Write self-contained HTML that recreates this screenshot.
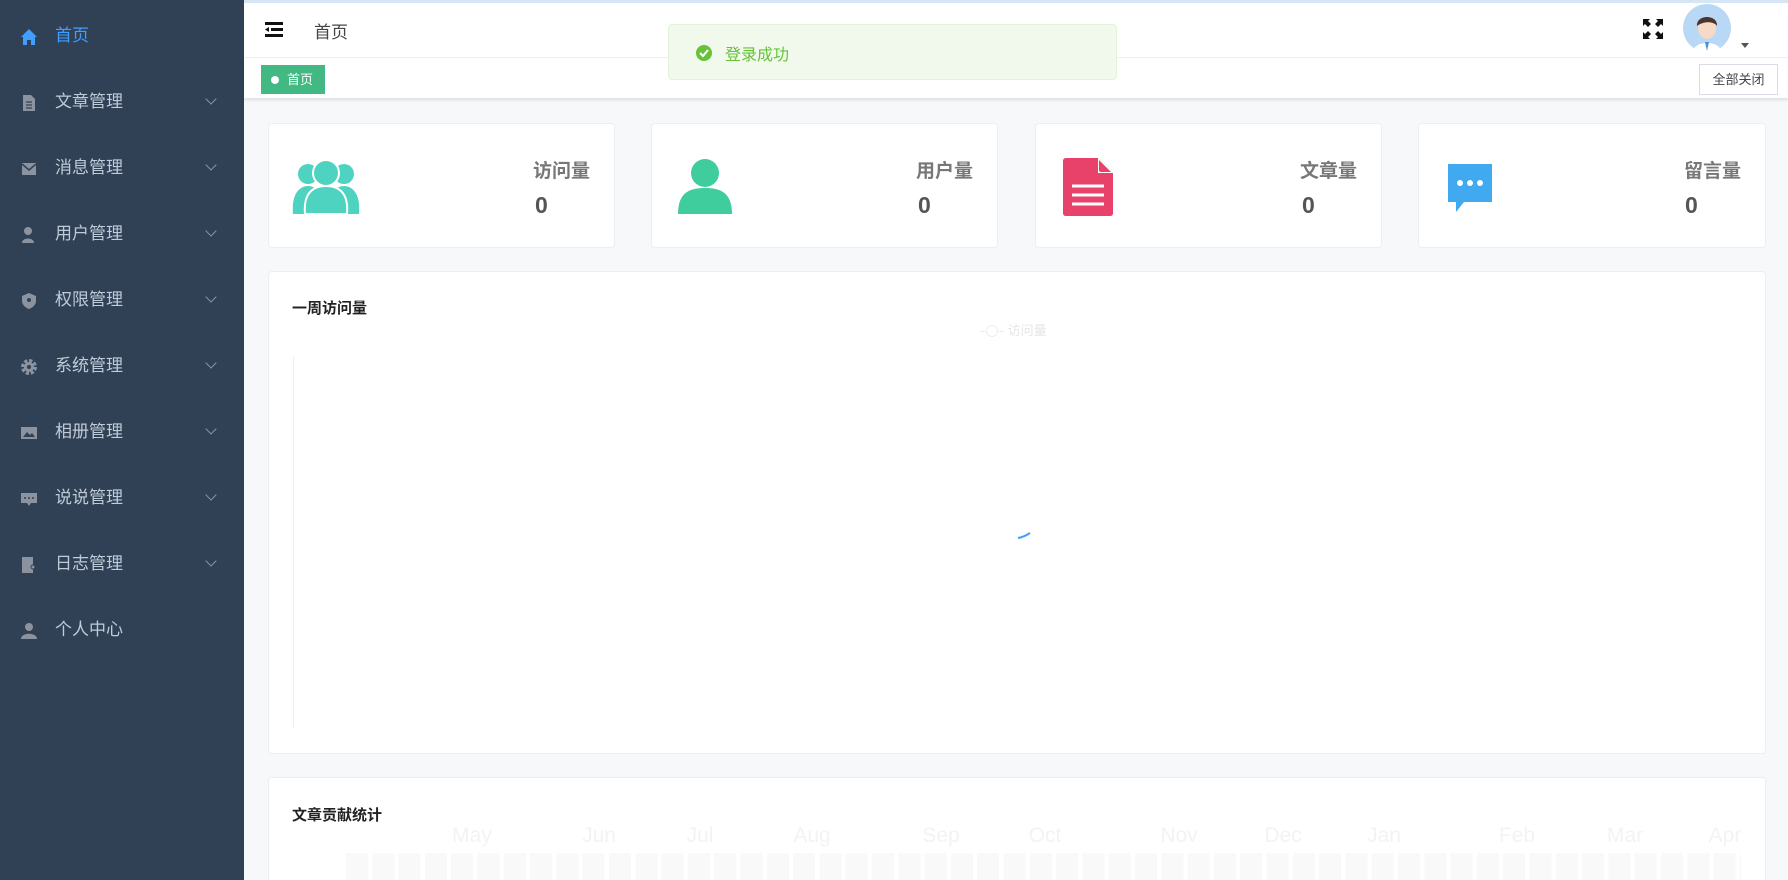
<!DOCTYPE html>
<html style="overflow:hidden;width:1788px;height:880px"><head><meta charset="utf-8"><style>
*{margin:0;padding:0;box-sizing:border-box}
body{width:1788px;height:880px;overflow:hidden;font-family:"Liberation Sans","Noto Sans CJK SC",sans-serif;background:#f7f8fa;position:relative}
.side{position:absolute;left:0;top:0;width:244px;height:880px;background:#304156}
.item{position:absolute;left:0;width:244px;height:66px;color:#bfcbd9;font-size:17px;line-height:66px}
.item .t{position:absolute;left:55px}
.item svg.ic{position:absolute;left:20px;top:25px}
.item .ar{position:absolute;left:207px;top:26px;width:8px;height:8px;border-right:1px solid #8a95a5;border-bottom:1px solid #8a95a5;transform:rotate(45deg)}
.top{position:absolute;left:244px;top:0;right:0;height:3px;background:#d6e6f5}
.hdr{position:absolute;left:244px;top:3px;right:0;height:55px;background:#fff;border-bottom:1px solid #f0f0f0}
.tags{position:absolute;left:244px;top:58px;right:0;height:40px;background:#fff;box-shadow:0 2px 3px rgba(0,0,0,.1)}
.card{position:absolute;background:#fff;border:1px solid #ebeef5;border-radius:4px}
.lab{position:absolute;right:24px;top:32px;font-size:19px;font-weight:bold;color:#777}
.num{position:absolute;left:266px;top:68px;font-size:23px;font-weight:bold;color:#555}
.mon{position:absolute;top:824px;font-size:21px;color:#f3f3f3;transform:translateX(-50%)}
</style></head><body>
<div class="side">
 <div class="item" style="top:3px;color:#409eff"><svg class="ic" width="18" height="18" viewBox="0 0 18 18"><path d="M9 1 L1 9 H3 V17 H7 V12 H11 V17 H15 V9 H17Z" fill="#409eff"/></svg><span class="t">首页</span></div>
 <div class="item" style="top:69px"><svg class="ic" width="18" height="18" viewBox="0 0 18 18"><path d="M3 1H11L15 5V17H3Z" fill="#8b93a0"/><path d="M6 8H12M6 11H12M6 14H12" stroke="#304156" stroke-width="1.2"/></svg><span class="t">文章管理</span><i class="ar"></i></div>
 <div class="item" style="top:135px"><svg class="ic" width="18" height="18" viewBox="0 0 18 18"><rect x="2" y="3" width="14" height="12" fill="#8b93a0"/><path d="M2 4L9 10L16 4" stroke="#304156" stroke-width="1.5" fill="none"/></svg><span class="t">消息管理</span><i class="ar"></i></div>
 <div class="item" style="top:201px"><svg class="ic" width="18" height="18" viewBox="0 0 18 18"><circle cx="8" cy="5" r="4" fill="#8b93a0"/><path d="M2 17C2 11 14 11 14 17Z" fill="#8b93a0"/></svg><span class="t">用户管理</span><i class="ar"></i></div>
 <div class="item" style="top:267px"><svg class="ic" width="18" height="18" viewBox="0 0 18 18"><path d="M9 1L16 4V9C16 13 12 16 9 17C6 16 2 13 2 9V4Z" fill="#8b93a0"/><circle cx="9" cy="8" r="2" fill="#304156"/></svg><span class="t">权限管理</span><i class="ar"></i></div>
 <div class="item" style="top:333px"><svg class="ic" width="18" height="18" viewBox="0 0 18 18"><circle cx="9" cy="9" r="6" fill="none" stroke="#8b93a0" stroke-width="4" stroke-dasharray="3 1.7"/><circle cx="9" cy="9" r="5" fill="#8b93a0"/><circle cx="9" cy="9" r="2" fill="#304156"/></svg><span class="t">系统管理</span><i class="ar"></i></div>
 <div class="item" style="top:399px"><svg class="ic" width="18" height="18" viewBox="0 0 18 18"><rect x="1" y="3" width="16" height="12" fill="#8b93a0"/><path d="M3 13L7 8L10 11L12 9L15 13Z" fill="#304156"/></svg><span class="t">相册管理</span><i class="ar"></i></div>
 <div class="item" style="top:465px"><svg class="ic" width="18" height="18" viewBox="0 0 18 18"><path d="M1 3H17V13H11L9 16L7 13H1Z" fill="#8b93a0"/><circle cx="5" cy="8" r="1" fill="#304156"/><circle cx="9" cy="8" r="1" fill="#304156"/><circle cx="13" cy="8" r="1" fill="#304156"/></svg><span class="t">说说管理</span><i class="ar"></i></div>
 <div class="item" style="top:531px"><svg class="ic" width="18" height="18" viewBox="0 0 18 18"><rect x="2" y="1" width="11" height="16" fill="#8b93a0"/><circle cx="13" cy="11" r="2" fill="#8b93a0" stroke="#304156"/></svg><span class="t">日志管理</span><i class="ar"></i></div>
 <div class="item" style="top:597px"><svg class="ic" width="18" height="18" viewBox="0 0 18 18"><circle cx="9" cy="5" r="4" fill="#8b93a0"/><path d="M1 17C1 10 17 10 17 17Z" fill="#8b93a0"/></svg><span class="t">个人中心</span></div>
</div>
<div class="top"></div>
<div class="hdr">
 <svg style="position:absolute;left:21px;top:19px" width="18" height="16" viewBox="0 0 18 16"><rect x="0" y="0" width="18" height="3" fill="#111"/><rect x="6" y="6" width="12" height="3" fill="#111"/><rect x="0" y="12" width="18" height="3" fill="#111"/><path d="M0 7.5L4 5V10Z" fill="#111"/></svg>
 <span style="position:absolute;left:70px;top:15px;font-size:17px;color:#444">首页</span>
 <svg style="position:absolute;left:1399px;top:16px" width="20" height="20" viewBox="0 0 20 20" fill="#111"><path d="M0 0H7L5 2L8 5L5 8L2 5L0 7ZM20 0V7L18 5L15 8L12 5L15 2L13 0ZM0 20V13L2 15L5 12L8 15L5 18L7 20ZM20 20H13L15 18L12 15L15 12L18 15L20 13Z"/></svg>
 <svg style="position:absolute;left:1439px;top:1px" width="48" height="48" viewBox="0 0 48 48"><circle cx="24" cy="24" r="24" fill="#b8d8f5"/><path d="M10 48C10 36 38 36 38 48Z" fill="#fff"/><path d="M22 38L24 47L26 38Z" fill="#4a90d9"/><ellipse cx="24" cy="24" rx="9" ry="11" fill="#f6d9c6"/><path d="M14 22C13 10 35 10 34 22C31 17 20 17 14 22Z" fill="#4a3530"/></svg>
 <div style="position:absolute;left:1497px;top:40px;border:4px solid transparent;border-top:5px solid #555"></div>
</div>
<div class="tags">
 <div style="position:absolute;left:17px;top:7px;width:64px;height:29px;background:#42b983;color:#fff;font-size:13px;line-height:29px;padding-left:26px"><span style="position:absolute;left:10px;top:11px;width:8px;height:8px;border-radius:50%;background:#fff"></span>首页</div>
 <div style="position:absolute;left:1455px;top:6px;width:79px;height:31px;border:1px solid #d8dce5;background:#fff;font-size:13px;color:#444;text-align:center;line-height:29px">全部关闭</div>
</div>
<div style="position:absolute;left:668px;top:24px;width:449px;height:56px;background:#f0f9eb;border:1px solid #e1f3d8;border-radius:4px">
 <svg style="position:absolute;left:26px;top:19px" width="18" height="18" viewBox="0 0 18 18"><circle cx="9" cy="9" r="8" fill="#67c23a"/><path d="M5 9L8 12L13 6" stroke="#fff" stroke-width="2" fill="none"/></svg>
 <span style="position:absolute;left:56px;top:16px;font-size:16px;color:#67c23a">登录成功</span>
</div>

<div class="card" style="left:268px;top:123px;width:347px;height:125px">
 <svg style="position:absolute;left:22px;top:34px" width="70" height="56" viewBox="0 0 70 56" fill="#4fd3c1"><circle cx="17" cy="16" r="10"/><path d="M2 56C0 34 10 28 17 28S34 34 32 56Z"/><circle cx="53" cy="16" r="10"/><path d="M38 56C36 34 46 28 53 28S70 34 68 56Z"/><circle cx="35" cy="15" r="13" stroke="#fff" stroke-width="2"/><path d="M14 56C12 32 25 28 35 28S58 32 56 56Z" stroke="#fff" stroke-width="2"/></svg>
 <div class="lab">访问量</div><div class="num" style="left:266px">0</div></div>
<div class="card" style="left:651px;top:123px;width:347px;height:125px">
 <svg style="position:absolute;left:26px;top:34px" width="54" height="56" viewBox="0 0 54 56" fill="#3fcd9e"><circle cx="27" cy="15" r="14"/><path d="M0 56C0 34 12 30 27 30S54 34 54 56Z"/></svg>
 <div class="lab">用户量</div><div class="num">0</div></div>
<div class="card" style="left:1035px;top:123px;width:347px;height:125px">
 <svg style="position:absolute;left:27px;top:34px" width="50" height="58" viewBox="0 0 50 58"><path d="M3 0H36L50 14V55Q50 58 47 58H3Q0 58 0 55V3Q0 0 3 0Z" fill="#e8416a"/><path d="M36 0V14H50" fill="#fff" stroke="#fff" stroke-width="2"/><path d="M36 2V12Q36 14 38 14H48" fill="#e8416a"/><path d="M9 28H41M9 37H41M9 46H41" stroke="#fff" stroke-width="3"/></svg>
 <div class="lab">文章量</div><div class="num">0</div></div>
<div class="card" style="left:1418px;top:123px;width:348px;height:125px">
 <svg style="position:absolute;left:29px;top:40px" width="44" height="48" viewBox="0 0 44 48"><path d="M0 0H44V38H16L8 48V38H0Z" fill="#40a9f0"/><circle cx="12" cy="19" r="3" fill="#fff"/><circle cx="22" cy="19" r="3" fill="#fff"/><circle cx="32" cy="19" r="3" fill="#fff"/></svg>
 <div class="lab">留言量</div><div class="num">0</div></div>

<div class="card" style="left:268px;top:271px;width:1498px;height:483px">
 <div style="position:absolute;left:23px;top:25px;font-size:15px;font-weight:bold;color:#222">一周访问量</div>
 <div style="position:absolute;left:711px;top:48px;font-size:13px;color:#e6e6e6"><span style="display:inline-block;width:24px;border-top:1px solid #eee;vertical-align:middle;position:relative"><i style="position:absolute;left:6px;top:-7px;width:12px;height:12px;border:1px solid #eee;border-radius:50%;background:#fff"></i></span> 访问量</div>
 <div style="position:absolute;left:24px;top:85px;width:1px;height:371px;background:#eee"></div>
 <svg style="position:absolute;left:747px;top:257px" width="20" height="12"><path d="M2 9Q8 8 14 4" stroke="#409eff" stroke-width="2" fill="none"/></svg>
</div>
<div class="card" style="left:268px;top:777px;width:1498px;height:103px;border-bottom:none;border-radius:4px 4px 0 0">
 <div style="position:absolute;left:23px;top:26px;font-size:15px;font-weight:bold;color:#222">文章贡献统计</div>
</div>
<div class="mon" style="left:472px">May</div><div class="mon" style="left:599px">Jun</div><div class="mon" style="left:700px">Jul</div><div class="mon" style="left:812px">Aug</div><div class="mon" style="left:941px">Sep</div><div class="mon" style="left:1045px">Oct</div><div class="mon" style="left:1179px">Nov</div><div class="mon" style="left:1283px">Dec</div><div class="mon" style="left:1384px">Jan</div><div class="mon" style="left:1517px">Feb</div><div class="mon" style="left:1625px">Mar</div><div class="mon" style="left:1725px">Apr</div>
<div style="position:absolute;left:346px;top:853px;width:1395px;height:27px;background:repeating-linear-gradient(90deg,#f9f9f9 0 22px,#fff 22px 26.3px)"></div>
</body></html>
